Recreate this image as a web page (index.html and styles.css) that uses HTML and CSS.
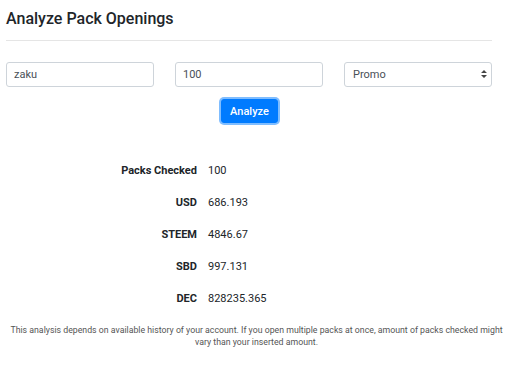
FILE: index.html
```html
<!DOCTYPE html>
<html lang="en">
<head>
  <meta charset="UTF-8" />
  <title>Analyze Pack Openings</title>
  <link rel="stylesheet" href="styles.css">
</head>
<body>
  <div class="page">
    <h2 class="title">Analyze Pack Openings</h2>

    <div class="form-row">
      <input type="text" class="field" value="zaku" />
      <input type="text" class="field" value="100" />
      <div class="select-wrap">
        <select class="field">
          <option>Promo</option>
        </select>
        <span class="arrows">
          <svg width="6" height="8" viewBox="0 0 6 8"><path d="M3 0 L6 3 L0 3 Z M0 5 L6 5 L3 8 Z" fill="#444"/></svg>
        </span>
      </div>
    </div>

    <div class="actions">
      <button class="btn">Analyze</button>
    </div>

    <div class="results">
      <div class="row"><span class="label">Packs Checked</span><span class="value">100</span></div>
      <div class="row"><span class="label">USD</span><span class="value">686.193</span></div>
      <div class="row"><span class="label">STEEM</span><span class="value">4846.67</span></div>
      <div class="row"><span class="label">SBD</span><span class="value">997.131</span></div>
      <div class="row"><span class="label">DEC</span><span class="value">828235.365</span></div>
    </div>
  </div>

  <p class="note">This analysis depends on available history of your account. If you open multiple packs at once, amount of packs checked might vary than your inserted amount.</p>
</body>
</html>
```

FILE: styles.css
```css
body {
  margin: 0;
  background: #ffffff;
  color: #212529;
  font-family: Roboto, 'Liberation Sans', sans-serif;
}

.page {
  width: 486px;
  padding: 0 6px;
}

.title {
  font-size: 16px;
  font-weight: 500;
  margin: 0;
  padding: 9px 0 12px;
  border-bottom: 1px solid #e5e5e5;
}

/* inputs */
.form-row {
  display: grid;
  grid-template-columns: repeat(3, 1fr);
  gap: 21px;
  margin-top: 21px;
}

.field {
  box-sizing: border-box;
  width: 100%;
  height: 25px;
  padding: 0 7px;
  border: 1px solid #ced4da;
  border-radius: 3px;
  background: #fff;
  color: #495057;
  font-family: Roboto, 'Liberation Sans', sans-serif;
  font-size: 11px;
  outline: none;
}

.select-wrap {
  position: relative;
}

.select-wrap select {
  appearance: none;
  -webkit-appearance: none;
  padding-left: 8px;
}

.arrows {
  position: absolute;
  right: 5px;
  top: 8px;
  line-height: 0;
}

.actions {
  display: flex;
  justify-content: center;
  margin-top: 12px;
}

.btn {
  height: 24px;
  padding: 0 8px;
  margin-left: 1px;
  background: #007bff;
  color: #fff;
  border: 1px solid #007bff;
  border-radius: 3px;
  font-family: Roboto, 'Liberation Sans', sans-serif;
  font-size: 11px;
  font-weight: 500;
  box-shadow: 0 0 0 2px rgba(0, 123, 255, 0.5);
  cursor: pointer;
}

/* results */
.results {
  margin-top: 41px;
}

.row {
  display: flex;
  align-items: baseline;
  height: 32px;
  font-size: 11px;
}

.label {
  width: 191px;
  text-align: right;
  font-weight: 700;
  color: #212529;
}

.value {
  margin-left: 11px;
  color: #212529;
}

.note {
  margin: 0;
  padding: 0 4px;
  text-align: center;
  font-size: 8.75px;
  line-height: 12px;
  color: #555;
}
```
